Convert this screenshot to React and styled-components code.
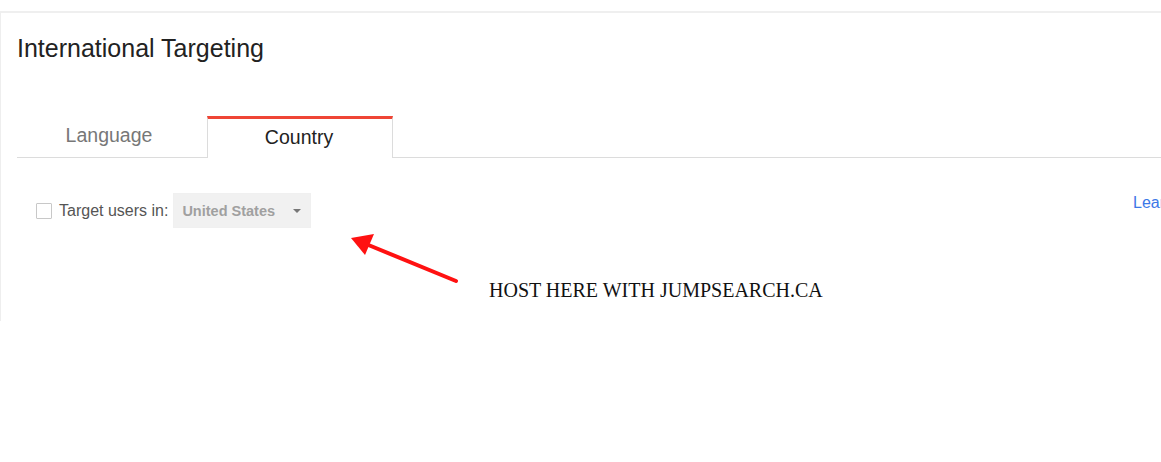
import React from "react";
import styled, { createGlobalStyle } from "styled-components";

const GlobalStyle = createGlobalStyle`
  html, body {
    margin: 0;
    padding: 0;
    background: #fff;
  }
  body {
    width: 1161px;
    height: 462px;
    overflow: hidden;
    font-family: "Liberation Sans", Arial, sans-serif;
  }
`;

const Page = styled.div`
  padding-top: 11px;
  position: relative;
  height: 462px;
  box-sizing: border-box;
`;

const Card = styled.section`
  height: 310px;
  border-top: 2px solid #efefef;
  border-left: 1px solid #eeeeee;
  box-sizing: border-box;
  padding: 20px 0 0 16px;
  overflow: hidden;
`;

const Title = styled.h1`
  margin: 0;
  font-size: 25px;
  font-weight: normal;
  color: #222;
  line-height: 30px;
`;

const TabBar = styled.div`
  display: flex;
  margin-top: 53px;
  border-bottom: 1px solid #dcdcdc;
  height: 41px;
`;

const Tab = styled.div`
  width: ${(p) => (p.active ? "186px" : "190px")};
  box-sizing: border-box;
  display: flex;
  align-items: center;
  justify-content: center;
  font-size: 19.5px;
  padding-bottom: 3px;
  padding-right: ${(p) => (p.active ? "2px" : "6px")};
  color: ${(p) => (p.active ? "#222" : "#777")};
  background: #fff;
  ${(p) =>
    p.active
      ? `
    border-top: 3px solid #ef4535;
    border-left: 1px solid #dcdcdc;
    border-right: 1px solid #dcdcdc;
    margin-bottom: -1px;
    height: 42px;
  `
      : ""}
`;

const Row = styled.div`
  display: flex;
  align-items: center;
  margin-top: 35px;
  padding-left: 19px;
  position: relative;
`;

const Checkbox = styled.span`
  width: 14px;
  height: 14px;
  border: 1px solid #c8c8c8;
  border-radius: 1px;
  margin-right: 7px;
`;

const Label = styled.span`
  font-size: 16px;
  color: #555;
  margin-right: 5px;
`;

const Select = styled.div`
  width: 138px;
  height: 35px;
  box-sizing: border-box;
  background: #f1f1f1;
  border: 1px solid #f0f0f0;
  display: flex;
  align-items: center;
  justify-content: space-between;
  padding: 0 8px 0 8px;
  font-size: 14.5px;
  font-weight: bold;
  color: #a0a0a0;
`;

const Caret = styled.span`
  width: 0;
  height: 0;
  border-left: 4px solid transparent;
  border-right: 4px solid transparent;
  border-top: 4px solid #777;
  margin-right: 1px;
`;

const Learn = styled.a`
  position: absolute;
  left: 1116px;
  top: 1px;
  font-size: 16px;
  color: #3b78e7;
  text-decoration: none;
  white-space: nowrap;
`;

const Note = styled.div`
  position: absolute;
  left: 489px;
  top: 279px;
  font-family: "Liberation Serif", "Times New Roman", serif;
  font-size: 20px;
  color: #111;
`;

const ArrowSvg = styled.svg`
  position: absolute;
  left: 340px;
  top: 230px;
`;

export default function App() {
  return (
    <>
      <GlobalStyle />
      <Page>
        <Card>
          <Title>International Targeting</Title>
          <TabBar>
            <Tab>Language</Tab>
            <Tab active>Country</Tab>
          </TabBar>
          <Row>
            <Checkbox />
            <Label>Target users in:</Label>
            <Select>
              <span>United States</span>
              <Caret />
            </Select>
            <Learn href="#">Learn more</Learn>
          </Row>
        </Card>
        <ArrowSvg width="130" height="60" viewBox="0 0 130 60">
          <line x1="116" y1="51" x2="26" y2="14" stroke="#f11" strokeWidth="4" strokeLinecap="round" />
          <polygon points="11,8 34,4 25,25" fill="#f11" />
        </ArrowSvg>
        <Note>HOST HERE WITH JUMPSEARCH.CA</Note>
      </Page>
    </>
  );
}
